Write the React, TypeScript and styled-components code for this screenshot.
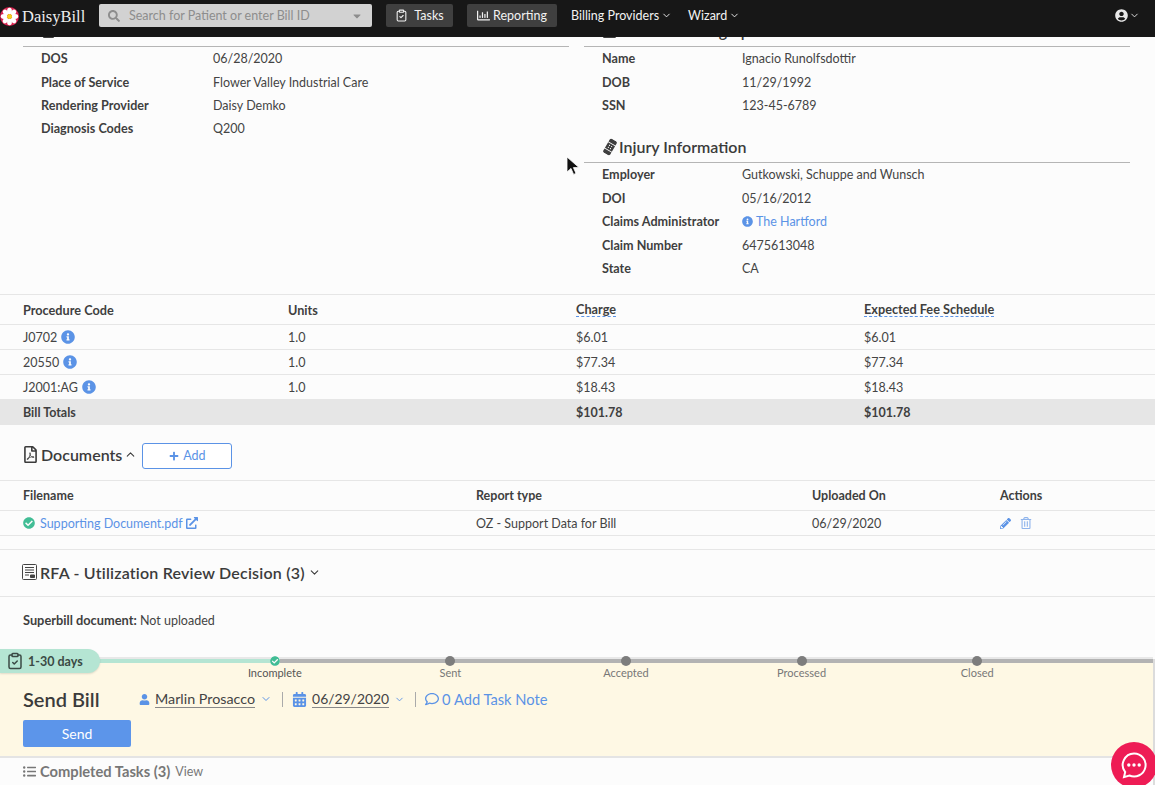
import React from 'react';
import styled, { createGlobalStyle } from 'styled-components';
import { ChevronDown, ChevronUp, ClipboardCheck } from 'lucide-react';
import {
  FaBandAid,
  FaCalendarAlt,
  FaCaretDown,
  FaCheckCircle,
  FaExternalLinkAlt,
  FaInfoCircle,
  FaListUl,
  FaPencilAlt,
  FaPlus,
  FaRegChartBar,
  FaRegComment,
  FaRegFilePdf,
  FaRegTrashAlt,
  FaSearch,
  FaUser,
  FaUserCircle,
} from 'react-icons/fa';

const GlobalStyle = createGlobalStyle`
  html, body {
    margin: 0;
    height: 100%;
    overflow: hidden;
    background: #fcfcfc;
  }
  * { box-sizing: border-box; }
  body {
    font-family: Lato, 'Liberation Sans', sans-serif;
    font-size: 12.5px;
    color: #3b3b3b;
  }
`;

const Page = styled.div`
  height: 785px;
  display: flex;
  flex-direction: column;
  overflow: hidden;
  position: relative;
`;

// Top nav
const Nav = styled.header`
  flex: 0 0 37px;
  background: #171717;
  display: flex;
  align-items: flex-start;
  position: relative;
  z-index: 2;
  color: #fff;
`;

const Brand = styled.div`
  width: 99px;
  height: 33px;
  display: flex;
  align-items: center;
  gap: 3px;
  font-family: 'Liberation Serif', serif;
  font-size: 16.5px;
  color: #eee;
`;

const Search = styled.div`
  width: 273px;
  height: 23px;
  margin-top: 4px;
  background: #d2d2d2;
  border-radius: 2px;
  display: flex;
  align-items: center;
  padding: 0 9px;
  color: #8d8d8d;
  gap: 9px;
  span { flex: 1; }
`;

const NavButton = styled.div<{ $width: number; $gap: number }>`
  width: ${p => p.$width}px;
  height: 23px;
  margin: 4px 0 0 14px;
  background: #3f3f3f;
  border-radius: 2px;
  display: flex;
  align-items: center;
  justify-content: center;
  gap: ${p => p.$gap}px;
  color: #f2f2f2;
`;

const NavLink = styled.div<{ $left: number }>`
  margin: 4px 0 0 ${p => p.$left}px;
  height: 23px;
  display: flex;
  align-items: center;
  gap: 2px;
  color: #f2f2f2;
`;

const UserMenu = styled.div`
  margin: 4px 15px 0 auto;
  height: 23px;
  display: flex;
  align-items: center;
  gap: 1px;
  color: #e8e8e8;
`;

// Scrolled content
const Main = styled.main`
  flex: 1;
  min-height: 0;
  overflow: hidden;
`;

const Scrolled = styled.div`
  margin-top: -20px;
`;

const InfoColumns = styled.section`
  display: grid;
  grid-template-columns: 546px 546px;
  column-gap: 15px;
  padding-left: 23px;
  height: 278px;
  border-bottom: 1px solid #e6e6e6;
`;

const SectionTitle = styled.h3`
  margin: 0;
  height: 30px;
  padding: 0 0 2px 18px;
  display: flex;
  align-items: center;
  gap: 4px;
  font-size: 16px;
  font-weight: 600;
  color: #3b3b3b;
  border-bottom: 1px solid #b5b5b5;
  svg { color: #3f3f3f; }
`;

const InjuryIcon = styled(FaBandAid)`
  margin-right: -3px;
  transform: rotate(-60deg);
`;

const InfoRows = styled.dl<{ $labelWidth: number }>`
  margin: 0 0 16px;
  padding: 0 0 0 18px;
  display: grid;
  grid-template-columns: ${p => p.$labelWidth}px 1fr;
  grid-auto-rows: 23.4px;
  align-items: center;
  dt { font-weight: 700; color: #3f3f3f; font-size: 12.6px; }
  dd { margin: 0; color: #444; }
`;

const Link = styled.a`
  color: #5b93e6;
  svg { vertical-align: -1px; margin-right: 3px; }
`;

const Table = styled.div<{ $cols: string }>`
  display: grid;
  grid-template-columns: ${p => p.$cols};
`;

const Cell = styled.div<{ $head?: boolean; $total?: boolean; $rowHeight: number }>`
  height: ${p => p.$rowHeight}px;
  display: flex;
  align-items: center;
  gap: 4px;
  border-bottom: 1px solid #e6e6e6;
  font-size: ${p => (p.$head ? 12.7 : 12.5)}px;
  font-weight: ${p => (p.$head || p.$total ? 700 : 400)};
  background: ${p => (p.$total ? '#e6e6e6' : 'transparent')};
  color: ${p => (p.$head || p.$total ? '#3f3f3f' : '#444')};
  &:nth-of-type(4n + 1) { padding-left: 23px; }
`;

const DashedHead = styled.span`
  border-bottom: 1px dashed #5b93e6;
  line-height: 14px;
`;

const InfoIcon = styled(FaInfoCircle)`
  color: #5b93e6;
  font-size: 14px;
`;

const DocumentsBar = styled.div`
  height: 56px;
  padding: 4px 0 0 22px;
  display: flex;
  align-items: center;
  border-bottom: 1px solid #e6e6e6;
`;

const Heading = styled.h3`
  margin: 0;
  display: flex;
  align-items: center;
  gap: 2px;
  font-size: 16px;
  font-weight: 600;
  color: #3b3b3b;
`;

const RfaHeading = styled(Heading)`
  gap: 3px;
  letter-spacing: 0.2px;
`;

const AddButton = styled.button`
  width: 90px;
  height: 26px;
  margin: 2px 0 0 5px;
  background: #fff;
  border: 1px solid #5b93e6;
  border-radius: 3px;
  color: #5b93e6;
  font: inherit;
  display: flex;
  align-items: center;
  justify-content: center;
  gap: 4px;
`;

const DocumentCell = styled.div<{ $head?: boolean; $first?: boolean }>`
  height: ${p => (p.$head ? 30 : 25)}px;
  display: flex;
  align-items: center;
  gap: 5px;
  padding-left: ${p => (p.$first ? 23 : 0)}px;
  border-bottom: 1px solid #e6e6e6;
  font-weight: ${p => (p.$head ? 700 : 400)};
  color: ${p => (p.$head ? '#3f3f3f' : '#444')};
`;

const ActionIcons = styled.div`
  height: 25px;
  display: flex;
  align-items: center;
  gap: 9px;
  border-bottom: 1px solid #e6e6e6;
`;

const SpacerRow = styled.div`
  height: 14px;
  border-bottom: 1px solid #e6e6e6;
`;

const RfaBar = styled.div`
  height: 47px;
  padding: 0 0 2px 22px;
  display: flex;
  align-items: center;
  border-bottom: 1px solid #e6e6e6;
`;

const Superbill = styled.p`
  margin: 0;
  padding: 15px 0 0 23px;
  color: #444;
  b { color: #3f3f3f; font-size: 12.8px; }
`;

// Task dock at the bottom
const Dock = styled.footer`
  flex: 0 0 126px;
  display: flex;
  flex-direction: column;
  position: relative;
  border-right: 2px solid #dcdcdc;
`;

const Timeline = styled.div`
  flex: 0 0 99px;
  background: #fef8e4;
  position: relative;
  border-bottom: 2px solid #e4e4e4;
  padding-top: 14px;
`;

const Track = styled.div`
  position: absolute;
  top: 0;
  left: 0;
  right: 0;
  height: 4px;
  background: linear-gradient(to right, #b5e5d3 275px, #b3b3b3 275px);
  box-shadow: 0 -2px 0 #e8e8e8;
`;

const Steps = styled.div`
  position: absolute;
  top: -3px;
  left: 187px;
  width: 878px;
  display: grid;
  grid-template-columns: repeat(5, 1fr);
`;

const Step = styled.div<{ $done?: boolean }>`
  display: flex;
  flex-direction: column;
  align-items: center;
  font-size: 11px;
  color: ${p => (p.$done ? '#555' : '#777')};
`;

const Dot = styled.span<{ $done?: boolean }>`
  width: 10px;
  height: 10px;
  border-radius: 50%;
  background: ${p => (p.$done ? '#fcfcfc' : '#7d7d7d')};
  color: #41bd95;
  display: flex;
  svg { width: 10px; height: 10px; }
`;

const AgeBadge = styled.div`
  position: absolute;
  left: 0;
  top: -10px;
  width: 100px;
  height: 24px;
  background: #b5e5d3;
  border-radius: 0 12px 12px 0;
  box-shadow: 0 1px 2px rgba(0, 0, 0, 0.12);
  display: flex;
  align-items: center;
  gap: 4px;
  padding-left: 6px;
  font-weight: 700;
  color: #3b4a45;
`;

const TaskRow = styled.div`
  height: 36px;
  margin-top: 8px;
  padding-left: 23px;
  display: flex;
  align-items: center;
  font-size: 14.3px;
`;

const TaskTitle = styled.div`
  width: 116px;
  font-size: 20px;
  font-weight: 600;
  color: #3b3b3b;
`;

const Picker = styled.span<{ $size?: number }>`
  display: flex;
  align-items: center;
  gap: 5px;
  color: #444;
  font-size: ${p => p.$size ?? 14.3}px;
  u { text-decoration: none; border-bottom: 1px solid #888; line-height: 17px; }
  > svg:first-child { color: #5b93e6; }
`;

const Divider = styled.span`
  width: 1px;
  height: 15px;
  margin: 0 9px 0 10px;
  background: #aaa;
`;

const NoteLink = styled.span`
  display: flex;
  align-items: center;
  gap: 3px;
  color: #5b93e6;
  font-size: 14.7px;
`;

const SendButton = styled.button`
  display: block;
  width: 108px;
  height: 27px;
  margin: 3px 0 0 23px;
  background: #5c95ea;
  border: 0;
  border-radius: 2px;
  color: #fff;
  font: inherit;
  font-size: 14px;
`;

const CompletedBar = styled.div`
  flex: 1;
  padding-left: 23px;
  display: flex;
  align-items: center;
  gap: 4px;
  color: #777;
  b { font-size: 14.7px; font-weight: 700; margin-top: -2px; }
  span { font-size: 12.5px; margin-left: 1px; }
`;

const ChatBubble = styled.div`
  position: absolute;
  right: -4px;
  bottom: -3px;
  width: 46px;
  height: 46px;
  border-radius: 50%;
  background: #ee1c55;
  display: flex;
  align-items: center;
  justify-content: center;
`;

const Cursor = styled.svg`
  position: absolute;
  left: 566px;
  top: 156px;
  z-index: 3;
`;

const DaisyLogo = () => (
  <svg width="19" height="19" viewBox="0 0 19 19">
    <circle cx="9.5" cy="9.5" r="9.5" fill="#d8224f" />
    {[0, 45, 90, 135, 180, 225, 270, 315].map(a => (
      <ellipse key={a} cx="9.5" cy="4" rx="2.4" ry="3.2" fill="#fff" transform={`rotate(${a} 9.5 9.5)`} />
    ))}
    <circle cx="9.5" cy="9.5" r="2.5" fill="#f4d21f" />
  </svg>
);

const RfaIcon = () => (
  <svg width="15" height="16" viewBox="0 0 15 16" fill="none" stroke="#444">
    <rect x="0.5" y="0.5" width="14" height="15" rx="1" />
    <path d="M3 3.5h9M3 6h9M3 8.5h9M3 11h4" />
    <path d="M8.5 11h4v2.5h-4z" fill="#444" />
  </svg>
);

const procedures = [
  { code: 'J0702', units: '1.0', charge: '$6.01' },
  { code: '20550', units: '1.0', charge: '$77.34' },
  { code: 'J2001:AG', units: '1.0', charge: '$18.43' },
];

const steps = ['Incomplete', 'Sent', 'Accepted', 'Processed', 'Closed'];

const App: React.FC = () => {
  return (
    <Page>
      <GlobalStyle />
      <Nav>
        <Brand>
          <DaisyLogo />
          DaisyBill
        </Brand>
        <Search>
          <FaSearch size={12} />
          <span>Search for Patient or enter Bill ID</span>
          <FaCaretDown size={12} />
        </Search>
        <NavButton $width={67} $gap={6}>
          <ClipboardCheck size={13} />
          Tasks
        </NavButton>
        <NavButton $width={90} $gap={3}>
          <FaRegChartBar size={13} />
          Reporting
        </NavButton>
        <NavLink $left={14}>
          Billing Providers <ChevronDown size={11} />
        </NavLink>
        <NavLink $left={16}>
          Wizard <ChevronDown size={11} />
        </NavLink>
        <UserMenu>
          <FaUserCircle size={13} />
          <ChevronDown size={11} />
        </UserMenu>
      </Nav>

      <Main>
        <Scrolled>
          <InfoColumns>
            <div>
              <SectionTitle>
                <FaRegFilePdf size={15} /> Bill Information
              </SectionTitle>
              <InfoRows $labelWidth={172}>
                <dt>DOS</dt>
                <dd>06/28/2020</dd>
                <dt>Place of Service</dt>
                <dd>Flower Valley Industrial Care</dd>
                <dt>Rendering Provider</dt>
                <dd>Daisy Demko</dd>
                <dt>Diagnosis Codes</dt>
                <dd>Q200</dd>
              </InfoRows>
            </div>
            <div>
              <SectionTitle>
                <FaUser size={15} /> Patient Demographics
              </SectionTitle>
              <InfoRows $labelWidth={140}>
                <dt>Name</dt>
                <dd>Ignacio Runolfsdottir</dd>
                <dt>DOB</dt>
                <dd>11/29/1992</dd>
                <dt>SSN</dt>
                <dd>123-45-6789</dd>
              </InfoRows>
              <SectionTitle>
                <InjuryIcon size={16} /> Injury Information
              </SectionTitle>
              <InfoRows $labelWidth={140}>
                <dt>Employer</dt>
                <dd>Gutkowski, Schuppe and Wunsch</dd>
                <dt>DOI</dt>
                <dd>05/16/2012</dd>
                <dt>Claims Administrator</dt>
                <dd>
                  <Link>
                    <FaInfoCircle size={11} />
                    The Hartford
                  </Link>
                </dd>
                <dt>Claim Number</dt>
                <dd>6475613048</dd>
                <dt>State</dt>
                <dd>CA</dd>
              </InfoRows>
            </div>
          </InfoColumns>

          <Table $cols="288px 288px 288px 1fr">
            <Cell $head $rowHeight={30}>Procedure Code</Cell>
            <Cell $head $rowHeight={30}>Units</Cell>
            <Cell $head $rowHeight={30}><DashedHead>Charge</DashedHead></Cell>
            <Cell $head $rowHeight={30}><DashedHead>Expected Fee Schedule</DashedHead></Cell>
            {procedures.map(row => (
              <React.Fragment key={row.code}>
                <Cell $rowHeight={25}>{row.code} <InfoIcon /></Cell>
                <Cell $rowHeight={25}>{row.units}</Cell>
                <Cell $rowHeight={25}>{row.charge}</Cell>
                <Cell $rowHeight={25}>{row.charge}</Cell>
              </React.Fragment>
            ))}
            <Cell $total $rowHeight={25}>Bill Totals</Cell>
            <Cell $total $rowHeight={25} />
            <Cell $total $rowHeight={25}>$101.78</Cell>
            <Cell $total $rowHeight={25}>$101.78</Cell>
          </Table>

          <DocumentsBar>
            <Heading>
              <FaRegFilePdf size={17} /> Documents <ChevronUp size={13} />
            </Heading>
            <AddButton>
              <FaPlus size={10} /> Add
            </AddButton>
          </DocumentsBar>

          <Table $cols="476px 336px 188px 1fr">
            <DocumentCell $head $first>Filename</DocumentCell>
            <DocumentCell $head>Report type</DocumentCell>
            <DocumentCell $head>Uploaded On</DocumentCell>
            <DocumentCell $head>Actions</DocumentCell>
            <DocumentCell $first>
              <FaCheckCircle size={12} color="#41bd95" />
              <Link>
                Supporting Document.pdf
                <FaExternalLinkAlt size={12} style={{ marginLeft: 3, marginRight: 0 }} />
              </Link>
            </DocumentCell>
            <DocumentCell>OZ - Support Data for Bill</DocumentCell>
            <DocumentCell>06/29/2020</DocumentCell>
            <ActionIcons>
              <FaPencilAlt size={11} color="#5b93e6" />
              <FaRegTrashAlt size={12} color="#8fb4ec" />
            </ActionIcons>
          </Table>
          <SpacerRow />

          <RfaBar>
            <RfaHeading>
              <RfaIcon /> RFA - Utilization Review Decision (3) <ChevronDown size={13} />
            </RfaHeading>
          </RfaBar>

          <Superbill>
            <b>Superbill document:</b> Not uploaded
          </Superbill>
        </Scrolled>
      </Main>

      <Dock>
        <Timeline>
          <Track />
          <AgeBadge>
            <ClipboardCheck size={18} />
            1-30 days
          </AgeBadge>
          <Steps>
            {steps.map((label, i) => (
              <Step key={label} $done={i === 0}>
                <Dot $done={i === 0}>{i === 0 && <FaCheckCircle />}</Dot>
                {label}
              </Step>
            ))}
          </Steps>
          <TaskRow>
            <TaskTitle>Send Bill</TaskTitle>
            <Picker>
              <FaUser size={11} />
              <u>Marlin Prosacco</u>
              <ChevronDown size={12} color="#5b93e6" />
            </Picker>
            <Divider />
            <Picker $size={13.9}>
              <FaCalendarAlt size={15} />
              <u>06/29/2020</u>
              <ChevronDown size={11} color="#5b93e6" />
            </Picker>
            <Divider />
            <NoteLink>
              <FaRegComment size={14} />
              0 Add Task Note
            </NoteLink>
          </TaskRow>
          <SendButton>Send</SendButton>
        </Timeline>
        <CompletedBar>
          <FaListUl size={13} />
          <b>Completed Tasks (3)</b>
          <span>View</span>
        </CompletedBar>
        <ChatBubble>
          <svg width="30" height="30" viewBox="0 0 30 30" fill="none">
            <path
              d="M15 3.5a11.5 11.5 0 1 1-4.6 22l-5.4 1.6 1.2-5A11.5 11.5 0 0 1 15 3.5z"
              stroke="#fff"
              strokeWidth="2"
            />
            <circle cx="9.8" cy="15" r="1.7" fill="#fff" />
            <circle cx="15" cy="15" r="1.7" fill="#fff" />
            <circle cx="20.2" cy="15" r="1.7" fill="#fff" />
          </svg>
        </ChatBubble>
      </Dock>

      <Cursor width="14" height="20" viewBox="0 0 14 20">
        <path d="M1 1v15l4-3.6 2.6 6 2.4-1-2.6-5.8H13z" fill="#111" stroke="#fff" strokeWidth="0.8" />
      </Cursor>
    </Page>
  );
};

export default App;
